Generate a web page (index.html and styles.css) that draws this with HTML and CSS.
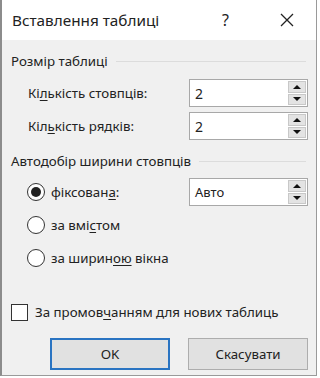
FILE: index.html
```html
<!DOCTYPE html>
<html lang="uk">
<head>
  <meta charset="UTF-8">
  <title>Вставлення таблиці</title>
  <link rel="stylesheet" href="styles.css">
</head>
<body>
  <div class="dialog">
    <div class="titlebar">
      <span class="title">Вставлення таблиці</span>
      <span class="help">?</span>
      <span class="close">
        <svg width="14" height="14" viewBox="0 0 14 14"><path d="M1 1 L13 13 M13 1 L1 13" stroke="#222" stroke-width="1.3" fill="none"/></svg>
      </span>
    </div>

    <div class="body">
      <div class="group-head"><span>Розмір таблиці</span></div>
      <div class="row size-row first">
        <span class="label">Кі<u>л</u>ькість стовпців:</span>
        <div class="spin">
          <span class="value">2</span>
          <div class="arrows">
            <span class="arrow up"></span>
            <span class="arrow down"></span>
          </div>
        </div>
      </div>
      <div class="row size-row">
        <span class="label">Кіл<u>ь</u>кість рядків:</span>
        <div class="spin">
          <span class="value">2</span>
          <div class="arrows">
            <span class="arrow up"></span>
            <span class="arrow down"></span>
          </div>
        </div>
      </div>

      <div class="group-head second"><span>Автодобір ширини стовпців</span></div>
      <div class="row radio-row first">
        <span class="radio checked"></span>
        <span class="radio-label">фіксован<u>а</u>:</span>
        <div class="spin auto">
          <span class="value">Авто</span>
          <div class="arrows">
            <span class="arrow up"></span>
            <span class="arrow down"></span>
          </div>
        </div>
      </div>
      <div class="row radio-row">
        <span class="radio"></span>
        <span class="radio-label">за вмі<u>с</u>том</span>
      </div>
      <div class="row radio-row">
        <span class="radio"></span>
        <span class="radio-label">за ширин<u>ою</u> вікна</span>
      </div>

      <div class="row check-row">
        <span class="checkbox"></span>
        <span class="check-label">За промов<u>ч</u>анням для нових таблиць</span>
      </div>

      <div class="buttons">
        <button class="btn default">OK</button>
        <button class="btn">Скасувати</button>
      </div>
    </div>
  </div>
</body>
</html>
```

FILE: styles.css
```css
html, body {
  margin: 0;
  padding: 0;
  background: #fff;
}
body {
  font-family: "Noto Sans", "Open Sans", sans-serif;
  font-size: 13.3px;
  color: #222;
}
u {
  text-decoration-thickness: 1px;
  text-underline-offset: 2px;
}

.dialog {
  width: 314px;
  height: 375px;
  border-left: 2px solid #8c8c8c;
  border-right: 1px solid #9a9a9a;
  border-bottom: 1px solid #9a9a9a;
  display: flex;
  flex-direction: column;
}

/* 제목 표시줄 */
.titlebar {
  height: 40px;
  background: #fff;
  display: flex;
  align-items: center;
  padding-left: 10px;
}
.title {
  font-size: 15.3px;
  flex: 1;
}
.help {
  font-size: 16px;
  width: 58px;
}
.close {
  width: 36px;
  display: flex;
  align-items: center;
}

.body {
  flex: 1;
  background: #f0f0f0;
  padding: 0 8px 0 9px;
}

/* 그룹 제목 + 구분선 */
.group-head {
  height: 20px;
  margin-top: 11px;
  display: flex;
  align-items: center;
}
.group-head::after {
  content: "";
  flex: 1;
  border-top: 1px solid #dcdcdc;
  margin-left: 8px;
  margin-right: 2px;
}

.row {
  display: flex;
  align-items: center;
}
.size-row {
  height: 28px;
  margin-top: 5px;
  padding-left: 17px;
}
.size-row.first {
  margin-top: 8px;
}
.size-row .label {
  flex: 1;
}

/* 스핀 박스 */
.spin {
  width: 117px;
  height: 26px;
  background: #fff;
  border: 1px solid #a8a8a8;
  display: flex;
  align-items: center;
}
.spin .value {
  flex: 1;
  padding-left: 5px;
  font-size: 14px;
}
.spin.auto .value {
  font-size: 13px;
}
.arrows {
  width: 18px;
  height: 24px;
  margin-right: 1px;
  display: flex;
  flex-direction: column;
  gap: 1px;
}
.arrow {
  flex: 1;
  background: #e3e3e3;
  border: 1px solid #c8c8c8;
  display: flex;
  align-items: center;
  justify-content: center;
}
.arrow::before {
  content: "";
  border-left: 4px solid transparent;
  border-right: 4px solid transparent;
}
.arrow.up::before {
  border-bottom: 4px solid #111;
}
.arrow.down::before {
  border-top: 4px solid #111;
}

/* 라디오 버튼 */
.radio-row {
  height: 26px;
  margin-top: 7px;
  padding-left: 16px;
}
.radio-row.first {
  margin-top: 8px;
}
.radio {
  width: 16px;
  height: 16px;
  border: 1px solid #333;
  border-radius: 50%;
  background: #fff;
  margin-right: 6px;
  display: flex;
  align-items: center;
  justify-content: center;
}
.radio.checked::before {
  content: "";
  width: 10px;
  height: 10px;
  border-radius: 50%;
  background: #222;
}
.radio-label {
  flex: 1;
}

/* 체크박스 */
.check-row {
  height: 20px;
  margin-top: 31px;
  padding-left: 0;
}
.checkbox {
  width: 15px;
  height: 15px;
  border: 1px solid #333;
  background: #fff;
  margin-right: 7px;
}

.buttons {
  display: flex;
  justify-content: flex-end;
  gap: 18px;
  margin-top: 16px;
}
.btn {
  width: 120px;
  height: 32px;
  font-family: "Noto Sans", "Open Sans", sans-serif;
  font-size: 13.3px;
  color: #222;
  background: #e1e1e1;
  border: 1px solid #adadad;
  padding: 0;
}
.btn.default {
  border: 2px solid #2a74c2;
}
```
